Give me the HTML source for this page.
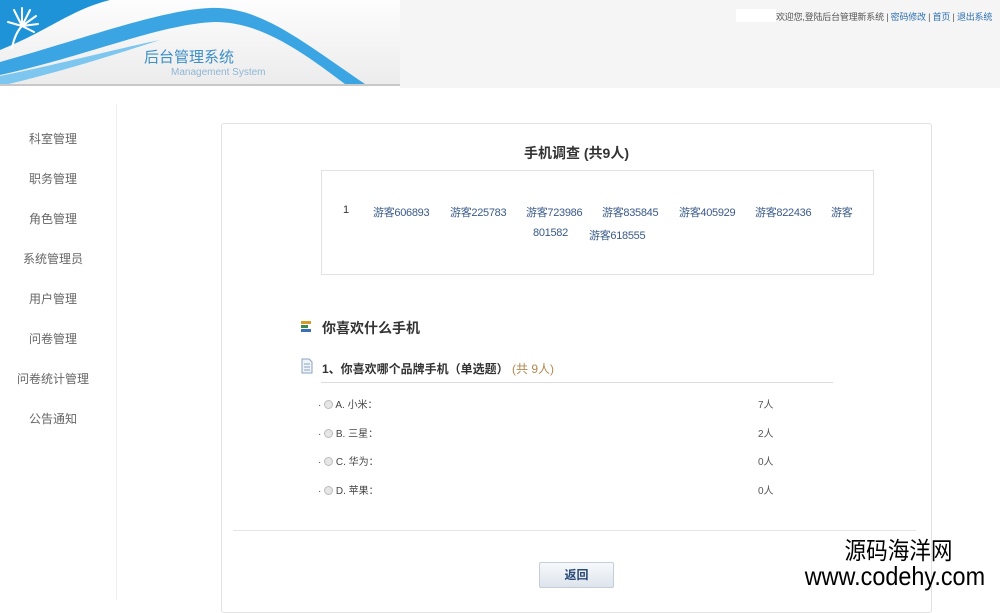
<!DOCTYPE html>
<html><head><meta charset="utf-8">
<style>
*{margin:0;padding:0;box-sizing:border-box}
body{width:1000px;height:600px;overflow:hidden;background:#fff;font-family:"Liberation Sans","Noto Sans CJK SC",sans-serif;position:relative;font-size:12px;color:#333}
.abs{position:absolute}
.side div{position:absolute;width:106px;text-align:center;font-size:12px;color:#666}
.u{position:absolute;font-size:11px;color:#3a5a8a;white-space:nowrap;letter-spacing:-0.3px}
</style></head><body>
<div class="abs" style="left:0;top:0;width:400px;height:86px;overflow:hidden;background:linear-gradient(#fdfdfd,#ececec);border-bottom:2px solid #c8c8c8">
<svg width="400" height="86" viewBox="0 0 400 86" style="position:absolute;left:0;top:0">
<path d="M0 62 C80 40 160 10 210 8 C260 6 300 40 365 84 L345 84 C300 50 260 22 215 22 C160 24 90 55 0 75 Z" fill="#3aa5e2"/>
<path d="M0 0 H110 C70 10 50 30 0 50 Z" fill="#1f93d8"/>
<path d="M0 76 C60 64 120 48 160 40 C110 56 60 72 0 86 Z" fill="#7cc6ef"/>
<g stroke="#fff" stroke-width="2" fill="none" stroke-linecap="round">
<path d="M12 48 C14 38 18 30 22 26"/><path d="M22 26 L14 10"/><path d="M22 26 L22 8"/><path d="M22 26 L30 10"/><path d="M22 26 L36 16"/><path d="M22 26 L38 24"/><path d="M22 26 L8 22"/><path d="M22 26 L34 32"/></g>
<text x="144" y="62" font-size="15" fill="#3d8fc8" font-family="Noto Sans CJK SC">后台管理系统</text>
<text x="171" y="75" font-size="10" fill="#8fb5d6" font-family="Liberation Sans">Management System</text>
</svg></div>
<div class="abs" style="left:400px;top:0;width:600px;height:88px;background:#f5f5f5"></div>
<div class="abs" style="left:736px;top:9px;width:40px;height:13px;background:#fff"></div>
<div class="abs" style="left:776px;top:10px;font-size:9px;color:#555;white-space:nowrap;letter-spacing:-0.2px">欢迎您,登陆后台管理新系统 | <span style="color:#2a6fb0">密码修改</span> | <span style="color:#2a6fb0">首页</span> | <span style="color:#2a6fb0">退出系统</span></div>
<div class="abs" style="left:116px;top:104px;width:1px;height:496px;background:#eee"></div>
<div class="side">
<div style="left:0;top:130px">科室管理</div>
<div style="left:0;top:170px">职务管理</div>
<div style="left:0;top:210px">角色管理</div>
<div style="left:0;top:250px">系统管理员</div>
<div style="left:0;top:290px">用户管理</div>
<div style="left:0;top:330px">问卷管理</div>
<div style="left:0;top:370px">问卷统计管理</div>
<div style="left:0;top:410px">公告通知</div>
</div>
<div class="abs" style="left:221px;top:123px;width:711px;height:490px;border:1px solid #e2e2e2;border-radius:3px"></div>
<div class="abs" style="left:221px;top:143px;width:711px;text-align:center;font-size:14px;font-weight:bold;color:#333">手机调查 (共9人)</div>
<div class="abs" style="left:321px;top:170px;width:553px;height:105px;border:1px solid #e2e2e2"></div>
<div class="u" style="left:343px;top:204px;color:#333">1</div>
<div class="u" style="left:373px;top:204px">游客606893</div>
<div class="u" style="left:450px;top:204px">游客225783</div>
<div class="u" style="left:526px;top:204px">游客723986</div>
<div class="u" style="left:602px;top:204px">游客835845</div>
<div class="u" style="left:679px;top:204px">游客405929</div>
<div class="u" style="left:755px;top:204px">游客822436</div>
<div class="u" style="left:831px;top:204px">游客</div>
<div class="u" style="left:533px;top:227px">801582</div>
<div class="u" style="left:589px;top:227px">游客618555</div>
<div class="abs" style="left:301px;top:321px;width:10px;height:12px">
<div style="height:3px;width:10px;background:#d69a2a;margin-bottom:1px"></div><div style="height:3px;width:7px;background:#3c8a4a;margin-bottom:1px"></div><div style="height:3px;width:10px;background:#3a6fb8"></div></div>
<div class="abs" style="left:322px;top:318px;font-size:14px;font-weight:bold;color:#333">你喜欢什么手机</div>
<svg class="abs" style="left:301px;top:358px" width="12" height="16"><path d="M1 1H8L11 4V15H1Z" fill="#f0f4f8" stroke="#8aa4c0"/><path d="M3 6H9M3 9H9M3 12H9" stroke="#8aa4c0"/></svg>
<div class="abs" style="left:322px;top:360px;font-size:12px;font-weight:bold;color:#333">1、你喜欢哪个品牌手机（单选题） <span style="font-weight:normal;color:#b08a50">(共 9人)</span></div>
<div class="abs" style="left:321px;top:382px;width:512px;height:1px;background:#ddd"></div>
<div class="abs" style="left:318px;top:392px;font-size:10px;color:#444;line-height:28.5px">
<div>· <span style="display:inline-block;width:9px;height:9px;border:1px solid #bbb;border-radius:50%;background:#e6e6e6;vertical-align:-1px"></span> A. 小米：</div>
<div>· <span style="display:inline-block;width:9px;height:9px;border:1px solid #bbb;border-radius:50%;background:#e6e6e6;vertical-align:-1px"></span> B. 三星：</div>
<div>· <span style="display:inline-block;width:9px;height:9px;border:1px solid #bbb;border-radius:50%;background:#e6e6e6;vertical-align:-1px"></span> C. 华为：</div>
<div>· <span style="display:inline-block;width:9px;height:9px;border:1px solid #bbb;border-radius:50%;background:#e6e6e6;vertical-align:-1px"></span> D. 苹果：</div>
</div>
<div class="abs" style="left:758px;top:392px;font-size:10px;color:#555;line-height:28.5px"><div>7人</div><div>2人</div><div>0人</div><div>0人</div></div>
<div class="abs" style="left:233px;top:530px;width:683px;height:1px;background:#e4e4e4"></div>
<div class="abs" style="left:539px;top:562px;width:75px;height:26px;border:1px solid #c4cdd8;border-radius:2px;background:linear-gradient(#f7f9fb,#dde4ec);text-align:center;line-height:24px;font-size:12px;font-weight:bold;color:#2a4a7a">返回</div>
<div class="abs" style="left:795px;top:539px;width:222px;text-align:center;line-height:25px;color:#000;transform:scaleX(0.9);transform-origin:left top"><div style="font-size:24px;margin-left:8px">源码海洋网</div><div style="font-size:26px">www.codehy.com</div></div>
</body></html>
